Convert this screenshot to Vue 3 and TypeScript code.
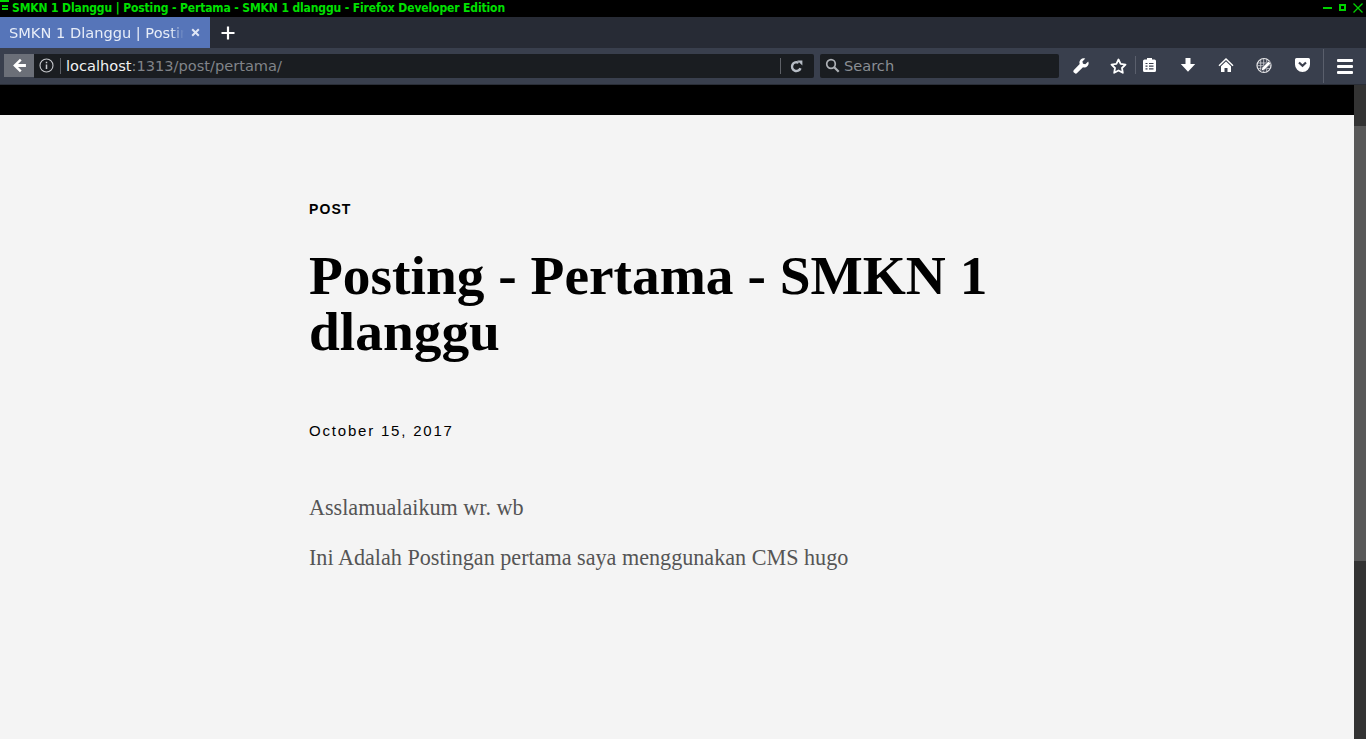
<script setup lang="ts">
const titleText = 'SMKN 1 Dlanggu | Posting - Pertama - SMKN 1 dlanggu - Firefox Developer Edition'
</script>

<template>
  <div class="screen">
    <div class="titlebar">
      <span class="corner"></span>
      <div class="title-left">
        <span class="menu-glyph"><i></i><i></i></span>
        <span class="title-text">{{ titleText }}</span>
      </div>
      <div class="win-buttons">
        <span class="win-min"></span>
        <span class="win-max"></span>
        <svg width="10" height="10" viewBox="0 0 10 10"><path d="M.5.500l9 9M9.500.500l-9 9" stroke="#00d200" stroke-width="1.300" fill="none" /></svg>
      </div>
    </div>

    <div class="tabbar">
      <div class="tab">
        <span class="tab-label">SMKN 1 Dlanggu | Posting</span>
        <svg class="tab-close" width="9" height="9" viewBox="0 0 9 9"><path d="M1.200 1.200l6.600 6.600M7.800 1.200L1.200 7.800" stroke="#dfe6f5" stroke-width="2" fill="none" /></svg>
      </div>
      <svg class="new-tab" width="14" height="14" viewBox="0 0 14 14"><path d="M7 .5v13M.5 7h13" stroke="#fff" stroke-width="2.200" fill="none" /></svg>
    </div>

    <div class="navbar">
      <div class="back-btn">
        <svg width="15" height="15" viewBox="0 0 14 14"><path d="M7.400.8L1 7l6.400 6.200 1.600-1.600L5.600 8.300H13V5.700H5.600L9 2.400z" fill="#fff" /></svg>
      </div>
      <div class="urlbar">
        <svg class="info" width="15" height="15" viewBox="0 0 15 15"><circle cx="7.500" cy="7.500" r="6.500" fill="none" stroke="#c6c8cc" stroke-width="1.100" /><path d="M7.500 6.500v4.500M7.500 3.800v1.500" stroke="#c6c8cc" stroke-width="1.500" /></svg>
        <span class="url-sep"></span>
        <span class="url-text"><span class="url-host">localhost</span>:1313/post/pertama/</span>
        <span class="url-sep2"></span>
        <svg class="reload" width="13" height="13" viewBox="0 0 13 13"><path d="M10.500 8.200A4.400 4.400 0 1 1 8.600 2.800" fill="none" stroke="#b6bcc5" stroke-width="2.400" /><path d="M7.200 .4h5.200v5.200z" fill="#b6bcc5" /></svg>
      </div>
      <div class="searchbar">
        <svg width="15" height="15" viewBox="0 0 15 15"><circle cx="6" cy="6" r="4.300" fill="none" stroke="#aeb1b6" stroke-width="1.700" /><path d="M9.200 9.200l4.500 4.500" stroke="#aeb1b6" stroke-width="2.200" /></svg>
        <span>Search</span>
      </div>
      <div class="tools">
        <svg class="tool t-wrench" width="16" height="16" viewBox="0 0 16 16"><path d="M15.200 3.400l-2.900 2.900-2.300-.6-.6-2.300L12.300.5a4.300 4.300 0 0 0-5.600 5.500L.9 11.900a1.800 1.800 0 0 0 0 2.500l.7.700a1.800 1.800 0 0 0 2.500 0L10 9.300a4.300 4.300 0 0 0 5.200-5.900z" fill="#fff" /></svg>
        <svg class="tool t-star" width="17" height="16" viewBox="0 0 17 16"><path d="M8.500 1.500l2.100 4.400 4.900.7-3.500 3.400.8 4.800-4.300-2.300-4.300 2.300.8-4.800L1.500 6.600l4.900-.7z" fill="none" stroke="#fff" stroke-width="1.800" stroke-linejoin="round" /></svg>
        <span class="tool-sep"></span>
        <svg class="tool t-clip" width="15" height="16" viewBox="0 0 15 16"><path d="M5 0h5v1.500h2.500A1.500 1.500 0 0 1 14 3v9.500a1.500 1.500 0 0 1-1.500 1.500h-10A1.500 1.500 0 0 1 1 12.500V3a1.500 1.500 0 0 1 1.500-1.500H5z" fill="#fff" /><path d="M3.500 5.500h2M7 5.500h4.500M3.500 8.200h2M7 8.200h4.500M3.500 10.900h2M7 10.900h4.500" stroke="#3b3f4d" stroke-width="1.200" /></svg>
        <svg class="tool t-down" width="16" height="16" viewBox="0 0 16 16"><path d="M5.500 0h5v6h4.700L8 13.800.8 6h4.700z" fill="#fff" /></svg>
        <svg class="tool t-home" width="16" height="16" viewBox="0 0 16 16"><path d="M8 0L0.500 7.300l1 1L8 2l6.500 6.300 1-1z" fill="#fff" /><path d="M3 8.200L8 3.600l5 4.600V14H9.500v-4h-3v4H3z" fill="#fff" /></svg>
        <svg class="tool t-web" width="17" height="17" viewBox="0 0 17 17"><circle cx="8" cy="8.500" r="7" fill="none" stroke="#e8e8ea" stroke-width="1.200" /><path d="M1.500 6h13M1.500 8.700h13M1.500 11.400h13M4.700 2.500v12M7.700 1.800v13.500M10.700 1.800v13.500" stroke="#d6d6da" stroke-width=".8" fill="none" /><path d="M5 14l1-3.500 6.500-6.500 2.500 2.500L8.500 13z" fill="#fff" stroke="#3b3f4d" stroke-width=".8" /></svg>
        <svg class="tool t-pocket" width="17" height="16" viewBox="0 0 17 16"><path d="M2.500 0h12A1.500 1.500 0 0 1 16 1.500v5a7.500 7.500 0 0 1-15 0v-5A1.500 1.500 0 0 1 2.500 0z" fill="#fff" /><path d="M5 4.500l3.500 3.300L12 4.500" fill="none" stroke="#3b3f4d" stroke-width="2.200" /></svg>
        <span class="tool-sep big"></span>
        <div class="hamburger"><i></i><i></i><i></i></div>
      </div>
    </div>

    <div class="viewport">
      <div class="page">
        <div class="page-top"></div>
        <main class="article">
          <div class="kicker">POST</div>
          <h1 class="headline">Posting - Pertama - SMKN 1 dlanggu</h1>
          <time class="date">October 15, 2017</time>
          <p class="para first">Asslamualaikum wr. wb</p>
          <p class="para">Ini Adalah Postingan pertama saya menggunakan CMS hugo</p>
        </main>
      </div>
      <div class="scrollbar">
        <div class="scroll-top"></div>
        <div class="scroll-thumb"></div>
      </div>
    </div>
  </div>
</template>

<style>
html, body { margin: 0; padding: 0; overflow: hidden; background: #000; }
</style>

<style scoped>
.screen { width: 1366px; height: 739px; display: flex; flex-direction: column; overflow: hidden; font-family: "DejaVu Sans", sans-serif; }

.titlebar { height: 17px; box-sizing: border-box; background: #000; display: flex; justify-content: space-between; align-items: center; flex: none; padding: 0; position: relative; }
.corner { position: absolute; left: 0; top: 0; width: 9px; height: 2px; background: #00d800; }
.title-left { display: flex; align-items: center; padding-left: 2px; margin-top: -2px; }
.menu-glyph { width: 6px; display: flex; flex-direction: column; gap: 1px; margin-right: 4px; }
.menu-glyph i { display: block; height: 2px; background: #00d800; }
.title-text { color: #00e000; font: bold 12px/14px "DejaVu Sans Condensed", "DejaVu Sans", sans-serif; font-stretch: condensed; white-space: pre; letter-spacing: -.12px; }
.win-buttons { display: flex; align-items: center; gap: 7px; padding-right: 3px; margin-top: -2px; }
.win-min { width: 9px; height: 2px; background: #00d200; }
.win-max { border: 2px solid #00d200; width: 3px; height: 3px; }

.tabbar { height: 31px; background: #272b35; display: flex; align-items: center; flex: none; }
.tab { width: 210px; height: 31px; background: #5675b9; display: flex; align-items: center; box-sizing: border-box; padding: 0 10px 0 9px; position: relative; }
.tab-label { color: #e7edf8; font-size: 14.600px; width: 176px; overflow: hidden; white-space: nowrap; -webkit-mask-image: linear-gradient(to right, #000 162px, transparent 175px); mask-image: linear-gradient(to right, #000 162px, transparent 175px); }
.tab-close { margin-left: 6px; }
.new-tab { margin-left: 11px; }

.navbar { height: 37px; box-sizing: border-box; background: #393f4d; display: flex; align-items: center; flex: none; border-bottom: 1px solid #2a2e37; padding-left: 4px; padding-bottom: 1px; }
.back-btn { width: 30px; height: 23px; background: #6b6f78; display: flex; align-items: center; justify-content: center; flex: none; }
.urlbar { width: 780px; height: 24px; background: #1a1d21; display: flex; align-items: center; flex: none; border-radius: 0 2px 2px 0; position: relative; box-sizing: border-box; }
.info { margin-left: 5px; flex: none; }
.url-sep { width: 1px; height: 16px; background: #5e6167; margin-left: 6px; flex: none; }
.url-text { margin-left: 5px; font-size: 14.600px; color: #818489; white-space: nowrap; }
.url-host { color: #f1f2f3; }
.url-sep2 { position: absolute; left: 746px; top: 4px; width: 1px; height: 16px; background: #5e6167; }
.reload { position: absolute; left: 756px; top: 6px; }
.searchbar { width: 239px; height: 24px; margin-left: 6px; background: #1a1d21; border-radius: 2px; display: flex; align-items: center; flex: none; box-sizing: border-box; padding-left: 5px; color: #8a8e94; font-size: 14.600px; gap: 4px; }
.tools { position: relative; flex: 1; height: 36px; }
.tool { position: absolute; top: 10px; }
.t-wrench { left: 14px; }
.t-star { left: 51px; }
.tool-sep { position: absolute; left: 76px; top: 8px; width: 1px; height: 18px; background: #5a5f6c; }
.t-clip { left: 83px; }
.t-down { left: 121px; }
.t-home { left: 159px; }
.t-web { left: 197px; top: 9px; }
.t-pocket { left: 235px; }
.tool-sep.big { left: 264px; top: 1px; height: 34px; }
.hamburger { position: absolute; left: 278px; top: 11px; width: 16px; display: flex; flex-direction: column; gap: 3px; }
.hamburger i { display: block; height: 3px; background: #fff; border-radius: 1px; }

.viewport { flex: 1; display: flex; min-height: 0; background: #f4f4f4; }
.page { flex: 1; min-width: 0; display: flex; flex-direction: column; }
.page-top { height: 30px; background: #000; flex: none; }
.article { padding: 86px 0 0 309px; width: 720px; box-sizing: content-box; }
.kicker { font: bold 14px/16px "Liberation Sans", Arial, sans-serif; letter-spacing: 1.100px; color: #000; }
.headline { margin: 31px 0 0; font: bold 55.400px/56px "Liberation Serif", serif; color: #000; width: 720px; }
.date { display: block; margin-top: 63px; font: 15px/16px "Liberation Sans", Arial, sans-serif; letter-spacing: 1.800px; color: #000; }
.para { margin: 0 0 28px; font: 22.150px/22px "Liberation Serif", serif; color: #555; }
.para.first { margin-top: 58px; }
.scrollbar { width: 12px; flex: none; background: #333; display: flex; flex-direction: column; }
.scroll-top { height: 41px; background: #333; }
.scroll-thumb { height: 435px; background: #585858; }
</style>
